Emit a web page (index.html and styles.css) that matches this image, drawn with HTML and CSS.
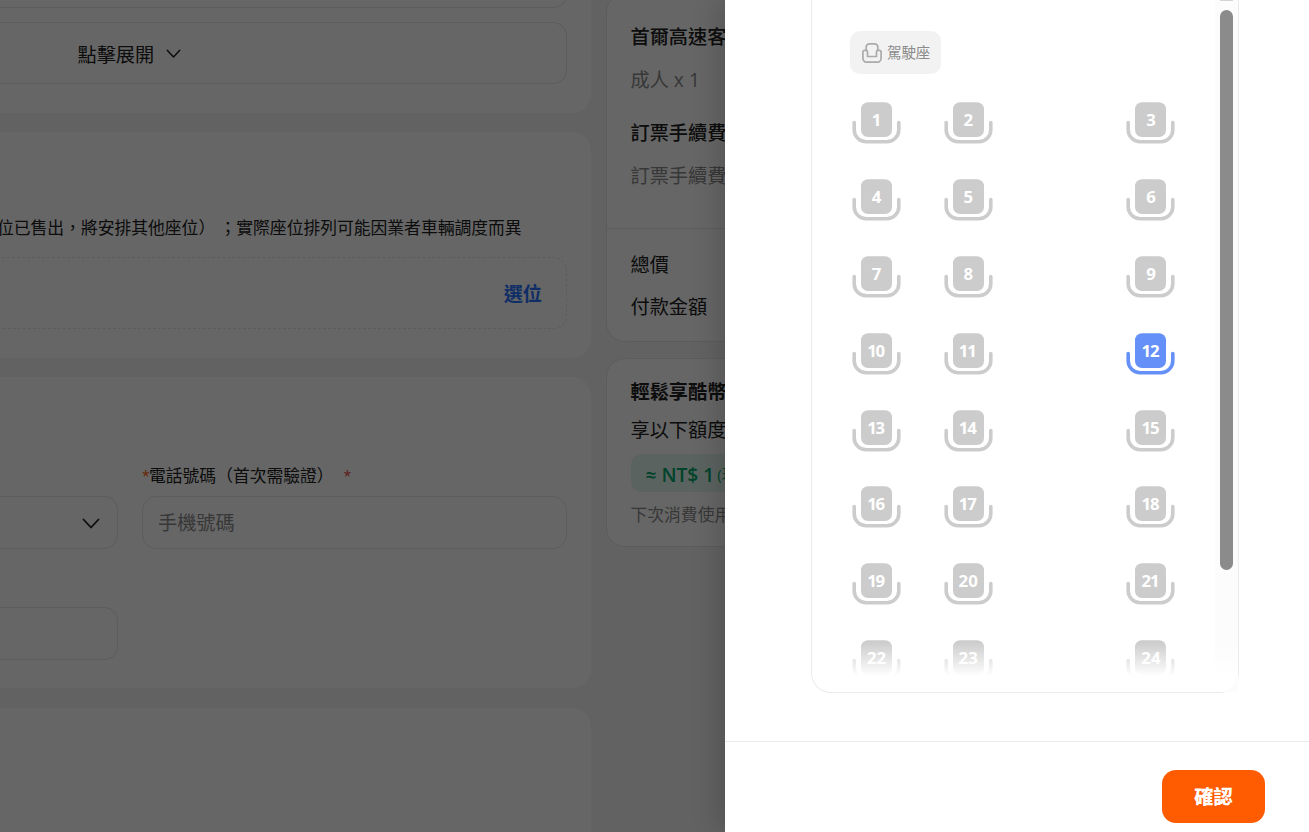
FILE: index.html
```html
<!DOCTYPE html>
<html lang="zh-Hant">
<head>
    <meta charset="UTF-8">
    <meta name="viewport" content="width=device-width, initial-scale=1.0">
    <title>選擇座位</title>
    <link rel="stylesheet" href="styles.css">
</head>
<body>
    <svg class="symbols" width="0" height="0">
        <symbol id="seat" viewBox="0 0 49 42">
            <rect x="9" y="0.3" width="31" height="34.7" rx="7" fill="currentColor"/>
            <path d="M2.2 20.5v7.3a12 12 0 0 0 12 12h20.6a12 12 0 0 0 12-12v-7.3" fill="none" stroke="currentColor" stroke-width="3.6" stroke-linecap="round"/>
        </symbol>
        <symbol id="chevron" viewBox="0 0 18 12">
            <path d="M1.5 1.5L9 9.5l7.5-8" fill="none" stroke="currentColor" stroke-width="1.8" stroke-linecap="round" stroke-linejoin="round"/>
        </symbol>
    </svg>

    <div class="page">
        <main class="main">
            <section class="card card-expand">
                <div class="box box-prev"></div>
                <div class="box box-expand">
                    <span>點擊展開</span>
                    <svg class="chevron-small"><use href="#chevron"/></svg>
                </div>
            </section>
            <section class="card card-seat">
                <p class="note">位已售出，將安排其他座位） ；實際座位排列可能因業者車輛調度而異</p>
                <div class="box box-select"><a>選位</a></div>
            </section>
            <section class="card card-contact">
                <div class="row">
                    <div class="field field-left">
                        <div class="label"></div>
                        <div class="input input-left"><svg class="chevron-big"><use href="#chevron"/></svg></div>
                    </div>
                    <div class="field field-phone">
                        <div class="label"><span class="star-orange">*</span>電話號碼（首次需驗證）<span class="star-red">*</span></div>
                        <div class="input">手機號碼</div>
                    </div>
                </div>
                <div class="input input-left input-last"></div>
            </section>
            <section class="card card-next"></section>
        </main>
        <aside class="side">
            <section class="panel panel-price">
                <div class="items">
                    <h3>首爾高速客運</h3>
                    <p class="gray">成人 x 1</p>
                    <h3>訂票手續費</h3>
                    <p class="gray">訂票手續費</p>
                </div>
                <div class="totals">
                    <p>總價</p>
                    <p>付款金額</p>
                </div>
            </section>
            <section class="panel panel-reward">
                <h3 class="bold">輕鬆享酷幣回饋</h3>
                <p class="desc">享以下額度回饋</p>
                <div class="reward"><b>≈ NT$ 1</b><span>(現折)</span></div>
                <p class="hint">下次消費使用</p>
            </section>
        </aside>
    </div>

    <div class="overlay"></div>

    <div class="drawer">
        <div class="map">
            <div class="map-content">
                <div class="driver">
                    <svg width="20" height="20" viewBox="0 0 20 20" fill="none" stroke="currentColor" stroke-width="1.7" stroke-linejoin="round">
                        <path d="M4.200 7.500V4A3 3 0 0 1 7.200.9h5.600a3 3 0 0 1 3 3.100v3.500"/>
                        <path d="M5.500 8.800v4.700h9V8.800a1.500 1.500 0 0 1 1.500-1.500h1.200a1.900 1.900 0 0 1 1.900 1.900v6a4 4 0 0 1-4 4H4.900a4 4 0 0 1-4-4v-6a1.900 1.900 0 0 1 1.900-1.900H4a1.500 1.500 0 0 1 1.500 1.500z"/>
                    </svg>
                    <span>駕駛座</span>
                </div>
                <div class="seats">
                    <div class="seat"><svg><use href="#seat"/></svg><span>1</span></div>
                    <div class="seat"><svg><use href="#seat"/></svg><span>2</span></div>
                    <div class="seat last"><svg><use href="#seat"/></svg><span>3</span></div>
                    <div class="seat"><svg><use href="#seat"/></svg><span>4</span></div>
                    <div class="seat"><svg><use href="#seat"/></svg><span>5</span></div>
                    <div class="seat last"><svg><use href="#seat"/></svg><span>6</span></div>
                    <div class="seat"><svg><use href="#seat"/></svg><span>7</span></div>
                    <div class="seat"><svg><use href="#seat"/></svg><span>8</span></div>
                    <div class="seat last"><svg><use href="#seat"/></svg><span>9</span></div>
                    <div class="seat narrow"><svg><use href="#seat"/></svg><span>10</span></div>
                    <div class="seat narrow"><svg><use href="#seat"/></svg><span>11</span></div>
                    <div class="seat narrow last available"><svg><use href="#seat"/></svg><span>12</span></div>
                    <div class="seat narrow"><svg><use href="#seat"/></svg><span>13</span></div>
                    <div class="seat narrow"><svg><use href="#seat"/></svg><span>14</span></div>
                    <div class="seat narrow last"><svg><use href="#seat"/></svg><span>15</span></div>
                    <div class="seat narrow"><svg><use href="#seat"/></svg><span>16</span></div>
                    <div class="seat narrow"><svg><use href="#seat"/></svg><span>17</span></div>
                    <div class="seat narrow last"><svg><use href="#seat"/></svg><span>18</span></div>
                    <div class="seat narrow"><svg><use href="#seat"/></svg><span>19</span></div>
                    <div class="seat"><svg><use href="#seat"/></svg><span>20</span></div>
                    <div class="seat narrow last"><svg><use href="#seat"/></svg><span>21</span></div>
                    <div class="seat"><svg><use href="#seat"/></svg><span>22</span></div>
                    <div class="seat"><svg><use href="#seat"/></svg><span>23</span></div>
                    <div class="seat last"><svg><use href="#seat"/></svg><span>24</span></div>
                </div>
            </div>
            <div class="scrollbar">
                <div class="arrow"></div>
                <div class="thumb"></div>
            </div>
            <div class="fade"></div>
        </div>
        <div class="footer">
            <button class="confirm">確認</button>
        </div>
    </div>
</body>
</html>
```
FILE: styles.css
```css
* {
    box-sizing: border-box;
}
body {
    margin: 0;
    width: 1309px;
    height: 832px;
    overflow: hidden;
    position: relative;
    background: #f5f5f5;
    color: #212121;
    font-family: "Open Sans", "Noto Sans CJK TC", sans-serif;
    font-size: 19.2px;
    line-height: 29px;
}
p, h3 {
    margin: 0;
    font-size: inherit;
    font-weight: 400;
    white-space: nowrap;
}
.symbols {
    position: absolute;
}
.page {
    display: flex;
    gap: 16px;
    height: 832px;
    overflow: hidden;
}

/* booking form */
.main {
    width: 594px;
    margin-left: -3px;
    flex-shrink: 0;
    display: flex;
    flex-direction: column;
    gap: 19px;
}
.card {
    background: #fff;
    border-radius: 0 19px 19px 0;
    padding-right: 24px;
    flex-shrink: 0;
}
.card-expand {
    height: 113px;
    border-top-right-radius: 0;
}
.card-seat {
    height: 226px;
    padding-top: 82px;
}
.card-contact {
    height: 311px;
    padding-top: 85px;
}
.card-next {
    height: 200px;
    margin-top: 1px;
}
.box, .input {
    border: 1px solid #e6e6e6;
    border-left: 0;
    border-radius: 0 14px 14px 0;
    display: flex;
    align-items: center;
}
.box-prev {
    height: 28px;
    margin-top: -20px;
    margin-bottom: 14px;
}
.box-expand {
    height: 62px;
    padding: 3px 0 0 80.5px;
    gap: 11.5px;
}
.chevron-small {
    width: 15px;
    height: 10px;
    margin-top: -2px;
}
.note {
    font-size: 16.8px;
    line-height: 28px;
}
.box-select {
    height: 72px;
    margin-top: 15px;
    padding-right: 24px;
    border-style: dashed;
    justify-content: flex-end;
}
.box-select a {
    color: #2673ff;
    font-weight: 700;
}
.row {
    display: flex;
    gap: 24px;
}
.field-left {
    width: 121px;
}
.field-phone {
    flex: 1;
}
.label {
    font-size: 16.8px;
    height: 28px;
    line-height: 28px;
    margin-bottom: 6px;
    white-space: nowrap;
}
.star-orange, .star-red {
    display: inline-block;
    width: 7px;
    font-size: 14px;
    line-height: 20px;
    vertical-align: 1px;
    color: #ff5b00;
}
.star-red {
    color: #e64340;
    margin-left: 10px;
}
.input {
    height: 53px;
    border-left: 1px solid #e6e6e6;
    border-radius: 14px;
    padding-left: 15px;
    color: #8b8b8b;
}
.input-left {
    width: 121px;
    border-left: 0;
    border-radius: 0 14px 14px 0;
    justify-content: flex-end;
    padding-right: 17px;
    color: #212121;
}
.input-last {
    margin-top: 58px;
}
.chevron-big {
    width: 18px;
    height: 12px;
    margin-top: 2px;
}

/* order summary */
.side {
    flex: 1;
    margin-top: -7px;
}
.panel {
    border: 1px solid #e6e6e6;
    border-radius: 19px;
    background: #fff;
    margin-left: -1px;
}
.panel-price {
    height: 349px;
    margin-bottom: 16px;
}
.items {
    height: 235px;
    padding: 28px 23.5px 0;
    border-bottom: 1px solid #e6e6e6;
}
.items h3 {
    font-weight: 500;
}
.gray {
    color: #8b8b8b;
    margin: 14px 0 24px;
}
.totals {
    padding: 21px 23.5px 0;
}
.totals p {
    margin-bottom: 13px;
}
.panel-reward {
    height: 189px;
    padding: 18px 23.5px 0;
}
.bold {
    font-weight: 700;
}
.desc {
    margin-top: 9px;
}
.reward {
    width: 200px;
    height: 38px;
    margin-top: 10px;
    padding: 2px 0 0 15px;
    display: flex;
    align-items: center;
    gap: 3px;
    border-radius: 10px;
    background: #e4f7f0;
    color: #00a86b;
    white-space: nowrap;
}
.reward b {
    font-weight: 600;
}
.reward span {
    font-size: 15px;
}
.hint {
    margin-top: 8px;
    color: #8b8b8b;
    font-size: 16.8px;
}

.overlay {
    position: absolute;
    inset: 0;
    background: rgba(0, 0, 0, 0.6);
}

/* seat drawer */
.drawer {
    position: absolute;
    top: 0;
    right: 0;
    width: 584px;
    height: 832px;
    background: #fff;
    box-shadow: -8px 0 24px rgba(0, 0, 0, 0.15);
    display: flex;
    flex-direction: column;
}
.map {
    position: relative;
    display: flex;
    width: 428px;
    height: 693px;
    margin: 0 0 48px 86px;
    border: 1px solid #ebebeb;
    border-top: 0;
    border-radius: 0 0 20px 20px;
}
.map-content {
    width: 403px;
    padding: 31px 0 0 19px;
}
.driver {
    display: flex;
    align-items: center;
    gap: 5px;
    width: 91px;
    height: 43px;
    margin-left: 19px;
    padding: 0 0 1px 12px;
    border-radius: 10px;
    background: #f2f2f2;
    color: #8b8b8b;
    font-size: 14.4px;
    line-height: 21px;
    white-space: nowrap;
}
.driver svg {
    color: #aaa;
    margin-top: 1px;
}
.seats {
    display: grid;
    grid-template-columns: 91.2px 92px 91.2px 91.2px;
    grid-auto-rows: 76.8px;
    margin-top: 28.4px;
}
.seat {
    position: relative;
    width: 49px;
    height: 42px;
    justify-self: center;
    color: #ccc;
}
.seat svg {
    display: block;
    width: 49px;
    height: 42px;
}
.seat span {
    position: absolute;
    inset: 0 0 auto;
    line-height: 35px;
    text-align: center;
    color: #fff;
    font-size: 16.8px;
    font-weight: 700;
}
.seat.narrow span {
    letter-spacing: -1.2px;
    padding-right: 2px;
}
.seat.last {
    grid-column: 4;
}
.seat.available {
    color: #6490f8;
}
.scrollbar {
    width: 23px;
    background: #fcfcfc;
    padding-left: 5px;
}
.arrow {
    width: 13px;
    height: 1px;
    background: #d5d5d5;
}
.thumb {
    width: 13px;
    height: 560px;
    margin-top: 9px;
    border-radius: 7px;
    background: #8b8b8b;
}
.fade {
    position: absolute;
    left: 0;
    right: 0;
    bottom: 0;
    height: 50px;
    border-radius: 0 0 20px 20px;
    background: linear-gradient(rgba(255, 255, 255, 0), #fff 34px);
}
.footer {
    flex: 1;
    border-top: 1px solid #e9e9e9;
    padding: 28px 44px 0 0;
    display: flex;
    justify-content: flex-end;
    align-items: flex-start;
}
.confirm {
    width: 103px;
    height: 53px;
    border: 0;
    border-radius: 14px;
    background: #ff5b00;
    color: #fff;
    font: inherit;
    font-weight: 900;
}
```
